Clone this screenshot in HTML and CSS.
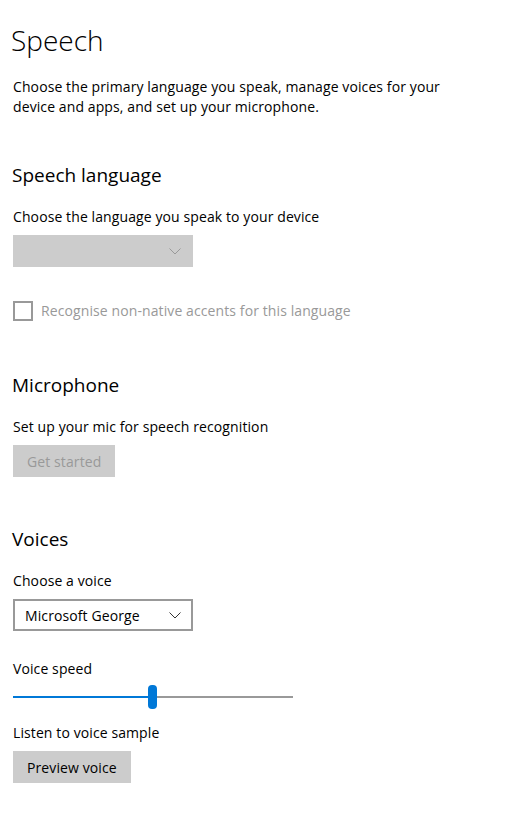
FILE: index.html
```html
<!DOCTYPE html>
<html lang="en">

<head>
    <meta charset="UTF-8">
    <meta name="viewport" content="width=device-width, initial-scale=1.0">
    <title>Speech</title>
    <link rel="stylesheet" href="styles.css">
</head>

<body>
    <div class="page">
        <h1 class="title">Speech</h1>
        <p class="intro">Choose the primary language you speak, manage voices for your device and apps, and set up your microphone.</p>

        <h2 class="section-title first">Speech language</h2>
        <div class="label">Choose the language you speak to your device</div>
        <div class="combo disabled">
            <span class="combo-text"></span>
            <svg class="chevron" width="12" height="7" viewBox="0 0 12 7"><path d="M0.5 0.5 L6 6 L11.5 0.5" fill="none" stroke="#999" stroke-width="1"/></svg>
        </div>
        <label class="check disabled">
            <span class="check-box"></span>
            <span>Recognise non-native accents for this language</span>
        </label>

        <h2 class="section-title">Microphone</h2>
        <div class="label">Set up your mic for speech recognition</div>
        <button class="btn disabled">Get started</button>

        <h2 class="section-title after-btn">Voices</h2>
        <div class="label">Choose a voice</div>
        <div class="combo">
            <span class="combo-text">Microsoft George</span>
            <svg class="chevron" width="12" height="7" viewBox="0 0 12 7"><path d="M0.5 0.5 L6 6 L11.5 0.5" fill="none" stroke="#333" stroke-width="1"/></svg>
        </div>

        <div class="label speed-label">Voice speed</div>
        <div class="slider">
            <div class="track-fill" style="width: 135px"></div>
            <div class="thumb"></div>
            <div class="track-rest"></div>
        </div>

        <div class="label sample-label">Listen to voice sample</div>
        <button class="btn">Preview voice</button>
    </div>
</body>

</html>
```

FILE: styles.css
```css
body {
    margin: 0;
    padding: 0;
    background: #fff;
    color: #000;
    font-family: 'Open Sans', 'Noto Sans', sans-serif;
    font-size: 14px;
    letter-spacing: 0.1px;
}

.page {
    padding: 20px 0 40px 13px;
}

.title {
    margin: 0;
    margin-left: -2px;
    font-size: 28px;
    font-weight: 300;
    line-height: 40px;
    letter-spacing: 0;
}

.intro {
    margin: 17px 0 0;
    width: 450px;
    line-height: 20px;
}

.section-title {
    margin: 50px 0 0 -1px;
    font-size: 19px;
    font-weight: 400;
    line-height: 28px;
    letter-spacing: 0;
}

.section-title.first {
    margin-top: 44px;
}

.section-title.after-btn {
    margin-top: 48px;
}

.label {
    margin-top: 18px;
    line-height: 20px;
}

.combo {
    margin-top: 8px;
    width: 180px;
    height: 32px;
    box-sizing: border-box;
    border: 2px solid #999;
    background: #fff;
    display: flex;
    align-items: center;
    justify-content: space-between;
    padding: 0 10px 0 10px;
}

.combo.disabled {
    background: #ccc;
    border-color: #ccc;
}

.chevron {
    display: block;
}

.check {
    margin-top: 34px;
    display: flex;
    align-items: center;
    gap: 8px;
    line-height: 20px;
}

.check.disabled {
    color: #999;
}

.check-box {
    width: 20px;
    height: 20px;
    box-sizing: border-box;
    border: 2px solid #999;
}

.btn {
    display: block;
    margin-top: 8px;
    height: 32px;
    padding: 0 14px;
    border: none;
    background: #ccc;
    color: #000;
    font-family: inherit;
    font-size: 14px;
    letter-spacing: 0.1px;
}

.btn.disabled {
    color: #999;
}

.speed-label {
    margin-top: 28px;
}

.slider {
    margin-top: 6px;
    width: 280px;
    height: 24px;
    display: flex;
    align-items: center;
}

.track-fill {
    height: 2px;
    background: #0078d7;
}

.track-rest {
    flex: 1;
    height: 2px;
    background: #999;
}

.thumb {
    width: 9px;
    height: 24px;
    border-radius: 4px;
    background: #0078d7;
}

.sample-label {
    margin-top: 14px;
}
```
